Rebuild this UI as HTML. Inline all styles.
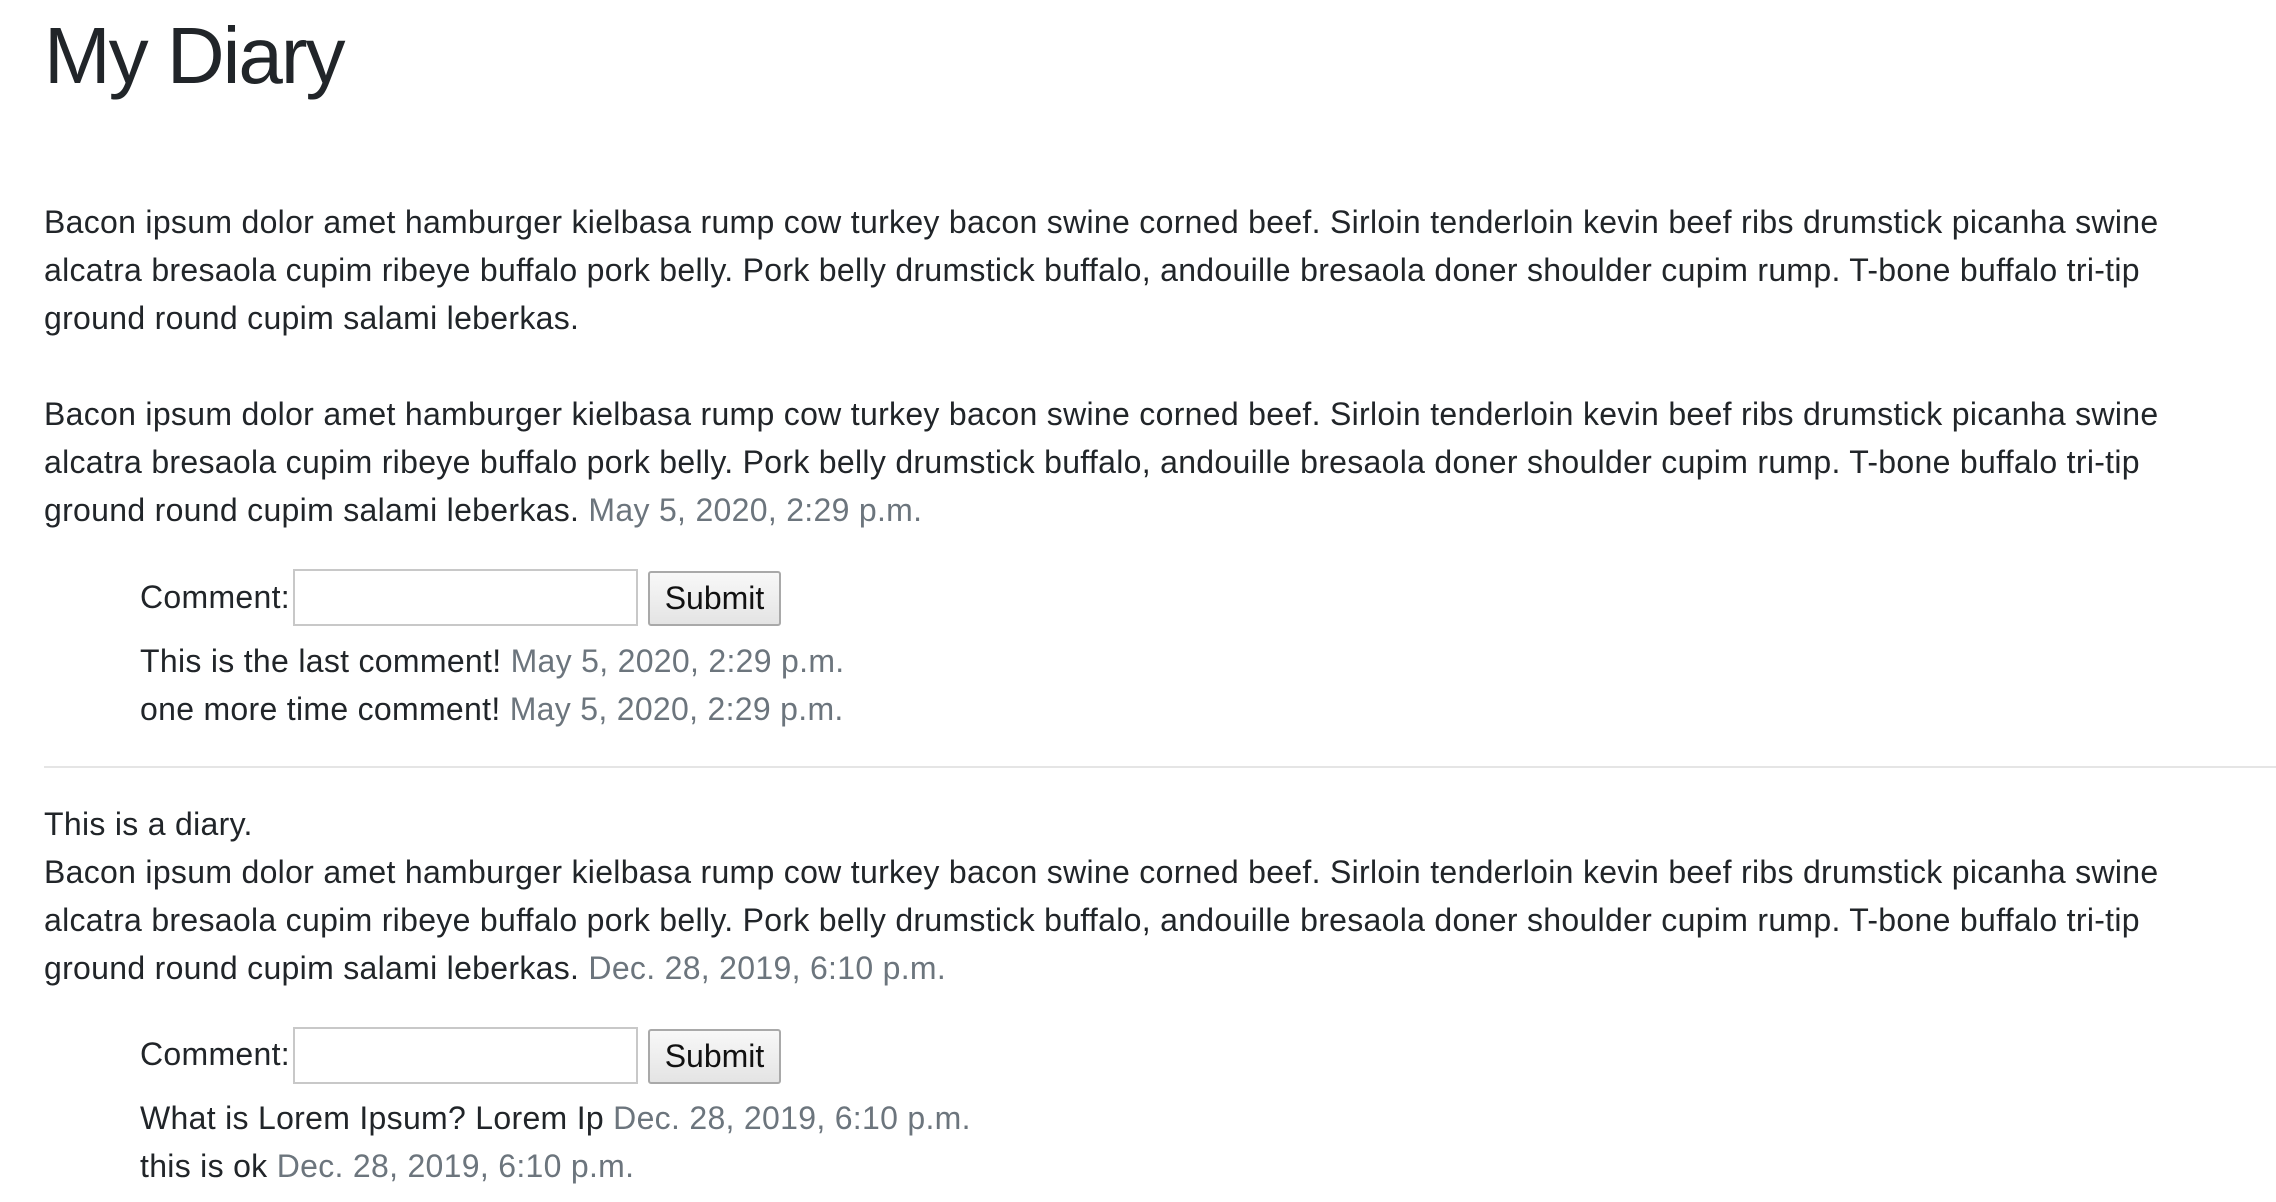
<!DOCTYPE html>
<html><head><meta charset="utf-8"><style>
html,body{margin:0;padding:0;background:#fff;}
body{width:2276px;height:1202px;position:relative;overflow:hidden;font-family:"Liberation Sans",Arial,sans-serif;color:#212529;font-size:32px;letter-spacing:0.3px;}
.l{position:absolute;left:44px;height:48px;line-height:48px;white-space:nowrap;}
.c{left:140px;}
.t{color:#6c757d;}
h1{position:absolute;left:44px;top:8px;margin:0;font-size:80px;line-height:96px;font-weight:400;letter-spacing:-2px;}
.inp{position:absolute;left:293px;width:341px;height:53px;border:2px solid #c8c8c8;background:#fff;}
.btn{position:absolute;left:648px;width:129px;height:51px;border:2px solid #a9a9a9;border-radius:3px;background:linear-gradient(#f8f8f8,#e4e4e4);font-size:32px;line-height:51px;text-align:center;color:#111;letter-spacing:0;}
.hr{position:absolute;left:44px;right:0;top:766px;height:2px;background:#e5e5e5;}
</style></head><body>
<h1>My Diary</h1>
<div class="l" style="top:198px">Bacon ipsum dolor amet hamburger kielbasa rump cow turkey bacon swine corned beef. Sirloin tenderloin kevin beef ribs drumstick picanha swine</div>
<div class="l" style="top:246px">alcatra bresaola cupim ribeye buffalo pork belly. Pork belly drumstick buffalo, andouille bresaola doner shoulder cupim rump. T-bone buffalo tri-tip</div>
<div class="l" style="top:294px">ground round cupim salami leberkas.</div>
<div class="l" style="top:390px">Bacon ipsum dolor amet hamburger kielbasa rump cow turkey bacon swine corned beef. Sirloin tenderloin kevin beef ribs drumstick picanha swine</div>
<div class="l" style="top:438px">alcatra bresaola cupim ribeye buffalo pork belly. Pork belly drumstick buffalo, andouille bresaola doner shoulder cupim rump. T-bone buffalo tri-tip</div>
<div class="l" style="top:486px">ground round cupim salami leberkas. <span class="t">May 5, 2020, 2:29 p.m.</span></div>
<div class="l c" style="top:573px">Comment:</div>
<div class="inp" style="top:569px"></div>
<div class="btn" style="top:571px">Submit</div>
<div class="l c" style="top:637px">This is the last comment! <span class="t">May 5, 2020, 2:29 p.m.</span></div>
<div class="l c" style="top:685px">one more time comment! <span class="t">May 5, 2020, 2:29 p.m.</span></div>
<div class="hr"></div>
<div class="l" style="top:800px">This is a diary.</div>
<div class="l" style="top:848px">Bacon ipsum dolor amet hamburger kielbasa rump cow turkey bacon swine corned beef. Sirloin tenderloin kevin beef ribs drumstick picanha swine</div>
<div class="l" style="top:896px">alcatra bresaola cupim ribeye buffalo pork belly. Pork belly drumstick buffalo, andouille bresaola doner shoulder cupim rump. T-bone buffalo tri-tip</div>
<div class="l" style="top:944px">ground round cupim salami leberkas. <span class="t">Dec. 28, 2019, 6:10 p.m.</span></div>
<div class="l c" style="top:1030px">Comment:</div>
<div class="inp" style="top:1027px"></div>
<div class="btn" style="top:1029px">Submit</div>
<div class="l c" style="top:1094px">What is Lorem Ipsum? Lorem Ip <span class="t">Dec. 28, 2019, 6:10 p.m.</span></div>
<div class="l c" style="top:1142px">this is ok <span class="t">Dec. 28, 2019, 6:10 p.m.</span></div>
</body></html>
